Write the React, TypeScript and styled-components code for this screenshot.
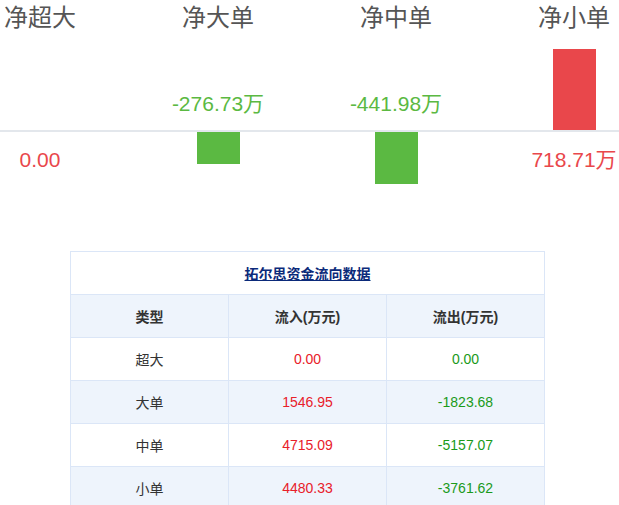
import React from "react";
import styled, { createGlobalStyle } from "styled-components";

const Global = createGlobalStyle`
  body { margin: 0; font-family: "Liberation Sans", "Noto Sans CJK SC", sans-serif; background: #fff; overflow: hidden; }
`;

const Chart = styled.div`
  display: flex;
  position: relative;
  height: 230px;
`;
const Axis = styled.div`
  position: absolute; left: 0; right: 0; top: 130px; height: 2px; background: #e3e7ec;
`;
const Col = styled.div<{ $first?: boolean }>`
  width: ${p => (p.$first ? "80px" : "178px")};
  margin-right: ${p => (p.$first ? "49px" : "0")};
  flex: none; display: flex; flex-direction: column; align-items: center;
`;
const Title = styled.div`
  font-size: 24px; color: #555; height: 49px; line-height: 36px; white-space: nowrap;
`;
const Above = styled.div`
  height: 82px; display: flex; flex-direction: column; justify-content: flex-end; align-items: center;
`;
const Below = styled.div`
  display: flex; flex-direction: column; align-items: center; position: relative; z-index: 1; margin-top: 1px;
`;
const Bar = styled.div<{ $c: string }>`
  width: 43px; background: ${p => p.$c};
`;
const Val = styled.div<{ $c: string }>`
  font-size: 21px; color: ${p => p.$c}; line-height: 24px; margin: 0 0 15px; white-space: nowrap;
`;
const ValB = styled(Val)`
  margin: 16px 0 0;
`;

const Table = styled.table`
  margin: 21px 0 0 70px; width: 475px; border-collapse: collapse; font-size: 14px; color: #333;
  td, th { border: 1px solid #dbe6f7; height: 42px; padding: 0; text-align: center; width: 33.3%; }
`;
const Row = styled.tr<{ $alt?: boolean }>`
  background: ${p => (p.$alt ? "#eef4fc" : "#fff")};
`;
const Cap = styled.a`
  color: #0b2a7a; font-weight: bold; text-decoration: underline; font-size: 14px;
`;
const Num = styled.span<{ $c: string }>` color: ${p => p.$c}; `;

const G = "#5bb942", R = "#e9474b";

const rows = [
  ["超大", "0.00", "0.00"],
  ["大单", "1546.95", "-1823.68"],
  ["中单", "4715.09", "-5157.07"],
  ["小单", "4480.33", "-3761.62"],
];

export default function App() {
  return (
    <>
      <Global />
      <Chart>
        <Axis />
        <Col $first>
          <Title>净超大</Title>
          <Above />
          <Below><ValB $c={R}>0.00</ValB></Below>
        </Col>
        <Col>
          <Title>净大单</Title>
          <Above><Val $c={G}>-276.73万</Val></Above>
          <Below><Bar $c={G} style={{ height: 32 }} /></Below>
        </Col>
        <Col>
          <Title>净中单</Title>
          <Above><Val $c={G}>-441.98万</Val></Above>
          <Below><Bar $c={G} style={{ height: 52 }} /></Below>
        </Col>
        <Col>
          <Title>净小单</Title>
          <Above><Bar $c={R} style={{ height: 82 }} /></Above>
          <Below><ValB $c={R}>718.71万</ValB></Below>
        </Col>
      </Chart>
      <Table>
        <tbody>
          <tr><td colSpan={3}><Cap>拓尔思资金流向数据</Cap></td></tr>
          <Row $alt><th>类型</th><th>流入(万元)</th><th>流出(万元)</th></Row>
          {rows.map((r, i) => (
            <Row key={r[0]} $alt={i % 2 === 1}>
              <td>{r[0]}</td>
              <td><Num $c="#e8202a">{r[1]}</Num></td>
              <td><Num $c="#1a9a1a">{r[2]}</Num></td>
            </Row>
          ))}
        </tbody>
      </Table>
    </>
  );
}
